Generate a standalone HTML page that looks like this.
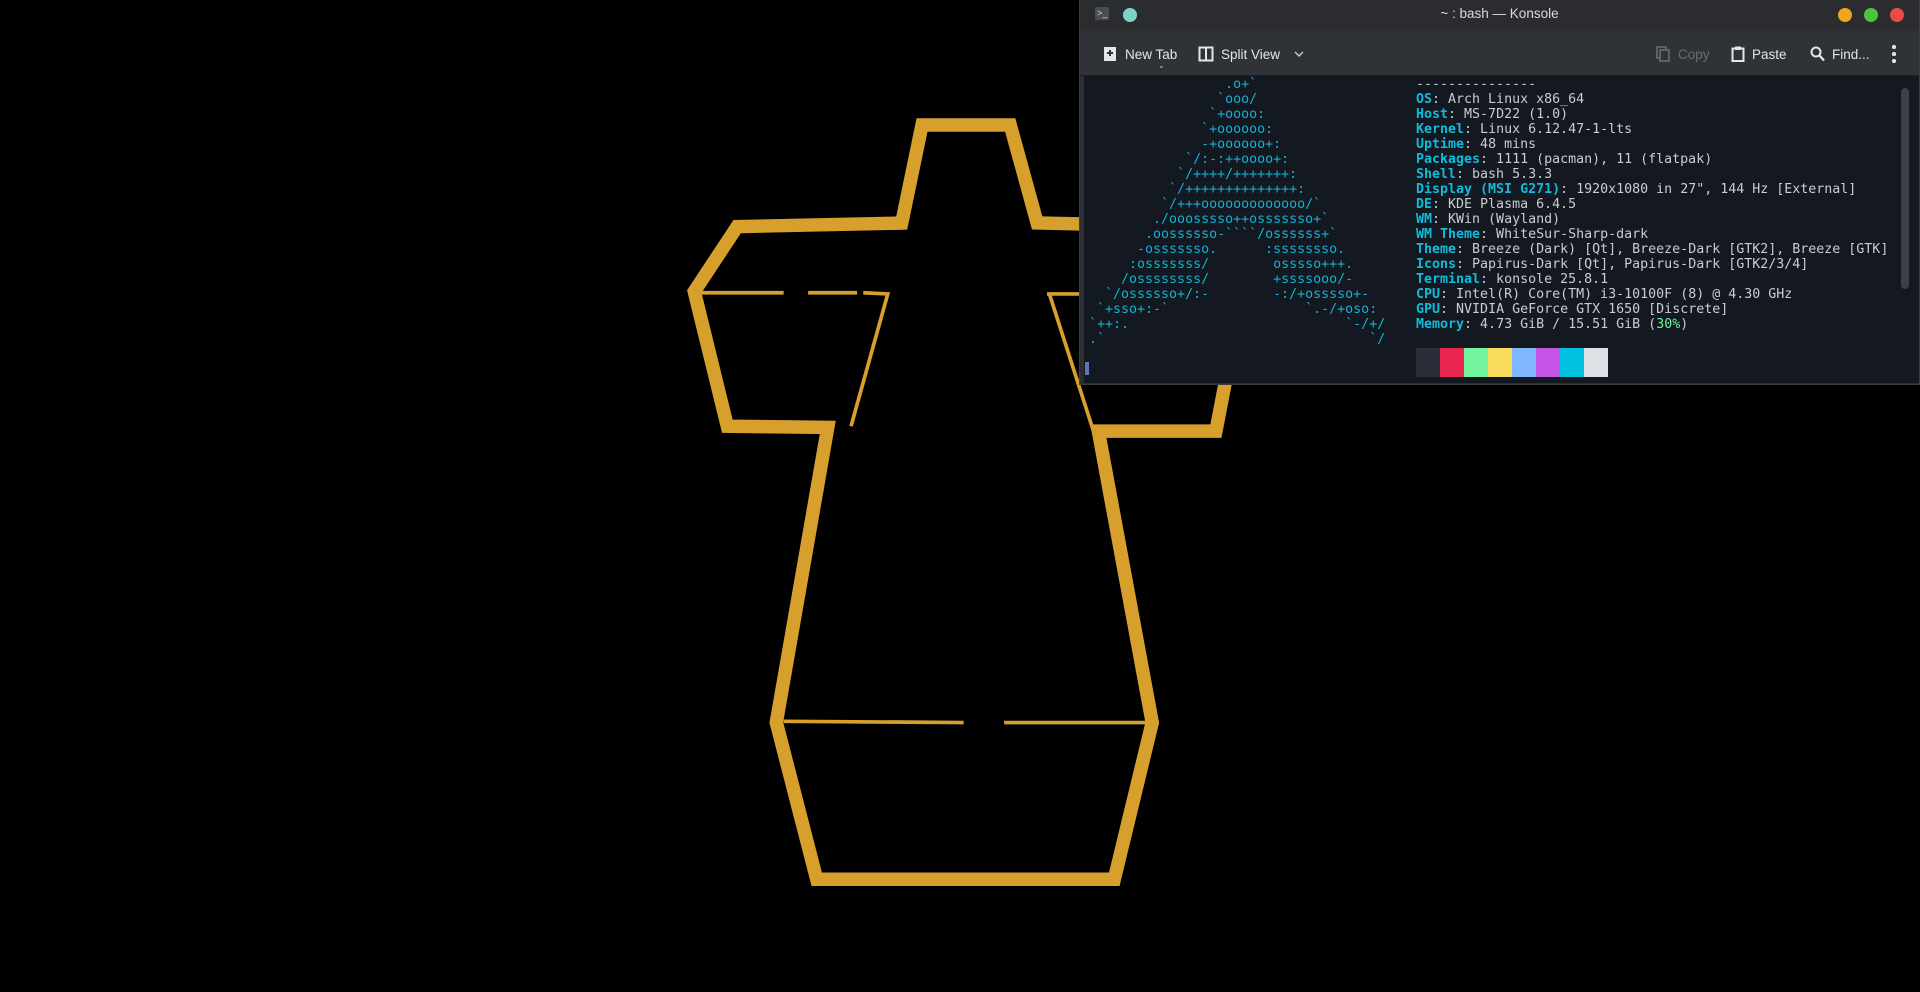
<!DOCTYPE html>
<html><head><meta charset="utf-8"><style>
*{margin:0;padding:0;box-sizing:border-box}
body{width:1920px;height:992px;background:#000;overflow:hidden;position:relative;font-family:"Liberation Sans",sans-serif}
#shape{position:absolute;left:0;top:0}
#win{position:absolute;left:1079px;top:0;width:841px;height:385px;background:#2b2e32;border:1px solid #3a3d41;border-top:none}
#title{position:absolute;left:0;top:0;width:100%;height:31px;background:#2a2c30;color:#d8dadc;font-size:13.5px;text-align:center;line-height:27px}
#tb{position:absolute;left:0;top:31px;width:100%;height:45px;background:#2f3236;border-bottom:1px solid #1c1e21;color:#e4e6e8;font-size:13.5px}
.ti{position:absolute;top:14px;display:flex;align-items:center;gap:7px;height:18px}
#term{position:absolute;left:4px;top:76px;width:835px;height:307px;background:#141820}
pre{position:absolute;font-family:"DejaVu Sans Mono",monospace;font-size:13.3px;line-height:15px;white-space:pre}
#logo{left:5px;top:1px;color:#12b3d3}
#info{left:332px;top:1px;color:#c9cdd3}
#info b{color:#0fbcdc;font-weight:bold}
.dot{position:absolute;top:8px;width:14px;height:14px;border-radius:50%}
</style></head><body>
<svg id="shape" width="1920" height="992" viewBox="0 0 1568 810">
<g fill="none" stroke="#d7a02c" stroke-linejoin="miter">
<path stroke-width="11" d="M736,184 L753,102 L825,102 L847,182 L890,183"/>
<path stroke-width="11" d="M741,182 L602,185 L567,238 L594,348 L676,349 L634,590 L667,718 L910,718 L941,590 L897,352 L993,352 L1003,300"/>
<path stroke-width="3" d="M570,239 L640,239 M660,239 L700,239 M705,239 L725,240 L695,348"/>
<path stroke-width="3" d="M855,240 L885,240 M857,240 L893,352"/>
<path stroke-width="3" d="M640,589 L787,590 M820,590 L937,590"/>
</g>
</svg>
<div id="win">
 <div id="title">
  <div style="position:absolute;left:15px;top:7px;width:14px;height:13px;background:#4a4d52;border-radius:2px;color:#ddd;font-size:9px;line-height:12px;text-align:left;padding-left:2px">&gt;_</div>
  <div class="dot" style="left:43px;background:#7fd3c6"></div>
  <span>~ : bash — Konsole</span>
  <div class="dot" style="left:758px;background:#f0a51e"></div>
  <div class="dot" style="left:784px;background:#4cc23e"></div>
  <div class="dot" style="left:810px;background:#ec4a47"></div>
 </div>
 <div id="tb">
  <div class="ti" style="left:22px"><svg width="16" height="16" viewBox="0 0 16 16"><rect x="2" y="1" width="12" height="12" fill="#e4e6e8"/><path d="M8 4v6M5 7h6" stroke="#2f3236" stroke-width="2"/><path d="M2 13h12v2H2z" fill="#e4e6e8"/></svg><span>New Tab</span></div>
  <div style="position:absolute;left:78px;top:30px;font-size:8px;color:#ccc">⌄</div>
  <div class="ti" style="left:118px"><svg width="16" height="16" viewBox="0 0 16 16"><rect x="1.5" y="1.5" width="13" height="13" fill="none" stroke="#e4e6e8" stroke-width="2"/><path d="M8 2v12" stroke="#e4e6e8" stroke-width="2"/></svg><span>Split View</span><svg width="12" height="10" viewBox="0 0 12 10" style="margin-left:6px"><path d="M2 3l4 4 4-4" fill="none" stroke="#ccc" stroke-width="1.4"/></svg></div>
  <div class="ti" style="left:576px;color:#6b6e72"><svg width="15" height="16" viewBox="0 0 15 16"><rect x="1" y="1" width="9" height="11" fill="none" stroke="#6b6e72" stroke-width="1.5"/><rect x="4" y="4" width="9" height="11" fill="#2f3236" stroke="#6b6e72" stroke-width="1.5"/></svg><span>Copy</span></div>
  <div class="ti" style="left:651px"><svg width="14" height="16" viewBox="0 0 14 16"><rect x="1.5" y="2.5" width="11" height="12.5" fill="none" stroke="#e4e6e8" stroke-width="2"/><rect x="4" y="0.5" width="6" height="3.5" fill="#e4e6e8"/></svg><span>Paste</span></div>
  <div class="ti" style="left:730px"><svg width="15" height="16" viewBox="0 0 15 16"><circle cx="6" cy="6" r="4.5" fill="none" stroke="#e4e6e8" stroke-width="2"/><path d="M9.5 9.5l4.5 5" stroke="#e4e6e8" stroke-width="2.3"/></svg><span>Find...</span></div>
  <div style="position:absolute;left:812px;top:14px;width:4px;height:18px"><div style="width:3.5px;height:3.5px;background:#e4e6e8;border-radius:50%;margin-bottom:3.5px"></div><div style="width:3.5px;height:3.5px;background:#e4e6e8;border-radius:50%;margin-bottom:3.5px"></div><div style="width:3.5px;height:3.5px;background:#e4e6e8;border-radius:50%"></div></div>
 </div>
 <div id="term">
<pre id="logo">                 .o+&#96;
                &#96;ooo/
               &#96;+oooo:
              &#96;+oooooo:
              -+oooooo+:
            &#96;/:-:++oooo+:
           &#96;/++++/+++++++:
          &#96;/++++++++++++++:
         &#96;/+++ooooooooooooo/&#96;
        ./ooosssso++osssssso+&#96;
       .oossssso-&#96;&#96;&#96;&#96;/ossssss+&#96;
      -osssssso.      :ssssssso.
     :osssssss/        osssso+++.
    /ossssssss/        +ssssooo/-
  &#96;/ossssso+/:-        -:/+osssso+-
 &#96;+sso+:-&#96;                 &#96;.-/+oso:
&#96;++:.                           &#96;-/+/
.&#96;                                 &#96;/</pre>
<pre id="info">---------------
<b>OS</b>: Arch Linux x86_64
<b>Host</b>: MS-7D22 (1.0)
<b>Kernel</b>: Linux 6.12.47-1-lts
<b>Uptime</b>: 48 mins
<b>Packages</b>: 1111 (pacman), 11 (flatpak)
<b>Shell</b>: bash 5.3.3
<b>Display (MSI G271)</b>: 1920x1080 in 27", 144 Hz [External]
<b>DE</b>: KDE Plasma 6.4.5
<b>WM</b>: KWin (Wayland)
<b>WM Theme</b>: WhiteSur-Sharp-dark
<b>Theme</b>: Breeze (Dark) [Qt], Breeze-Dark [GTK2], Breeze [GTK]
<b>Icons</b>: Papirus-Dark [Qt], Papirus-Dark [GTK2/3/4]
<b>Terminal</b>: konsole 25.8.1
<b>CPU</b>: Intel(R) Core(TM) i3-10100F (8) @ 4.30 GHz
<b>GPU</b>: NVIDIA GeForce GTX 1650 [Discrete]
<b>Memory</b>: 4.73 GiB / 15.51 GiB (<span style="color:#73f59f">30%</span>)</pre>
  <div style="position:absolute;left:332px;top:272px;display:flex;height:29px">
   <div style="width:24px;background:#2a2e38"></div><div style="width:24px;background:#e8264f"></div><div style="width:24px;background:#73f59f"></div><div style="width:24px;background:#f7dc5c"></div><div style="width:24px;background:#80b8ff"></div><div style="width:24px;background:#c553e8"></div><div style="width:24px;background:#00c2e0"></div><div style="width:24px;background:#dde0e4"></div>
  </div>
  <div style="position:absolute;left:1px;top:286px;width:4px;height:13px;background:#5a7bb0"></div>
  <div style="position:absolute;left:817px;top:12px;width:8px;height:201px;background:#3d4147;border-radius:4px"></div>
 </div>
</div>
</body></html>
